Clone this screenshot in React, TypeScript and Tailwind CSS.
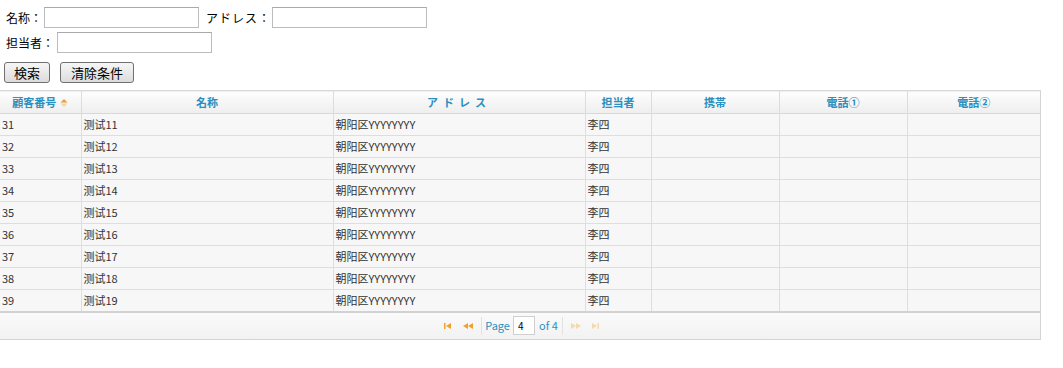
import React from 'react'

const COLS = [
  { key: 'no', label: '顧客番号', w: 81, sort: true },
  { key: 'name', label: '名称', w: 252 },
  { key: 'addr', label: 'アドレス', w: 252 },
  { key: 'staff', label: '担当者', w: 66 },
  { key: 'mobile', label: '携帯', w: 128 },
  { key: 'tel1', label: '電話①', w: 128 },
  { key: 'tel2', label: '電話②', w: 133 },
]

const ROWS = Array.from({ length: 9 }, (_, i) => ({
  no: String(31 + i),
  name: `测试${11 + i}`,
  addr: '朝阳区YYYYYYYY',
  staff: '李四',
  mobile: '',
  tel1: '',
  tel2: '',
}))

const font = { fontFamily: '"Noto Sans CJK JP", "Noto Sans CJK SC", "Liberation Sans", sans-serif' }

function TextInput({ w }: { w: string }) {
  return <input className={`${w} h-[21px] border border-[#bcbcbc] border-t-[#a9a9a9] bg-white px-1 text-[12px] outline-none`} />
}

function PagerIcon({ kind, on }: { kind: 'first' | 'prev' | 'next' | 'last'; on: boolean }) {
  const c = on ? '#f0a030' : '#f5d8b0'
  return (
    <svg width="16" height="10" viewBox="0 0 16 10" className="mx-[2px]">
      {kind === 'first' && (
        <>
          <rect x="3" y="2" width="1.5" height="6" fill={c} />
          <path d="M5 5 L10 2 L10 8 Z" fill={c} />
        </>
      )}
      {kind === 'prev' && (
        <>
          <path d="M2 5 L7 2 L7 8 Z" fill={c} />
          <path d="M7 5 L12 2 L12 8 Z" fill={c} />
        </>
      )}
      {kind === 'next' && (
        <>
          <path d="M4 2 L9 5 L4 8 Z" fill={c} />
          <path d="M9 2 L14 5 L9 8 Z" fill={c} />
        </>
      )}
      {kind === 'last' && (
        <>
          <path d="M5 2 L10 5 L5 8 Z" fill={c} />
          <rect x="10.5" y="2" width="1.5" height="6" fill={c} />
        </>
      )}
    </svg>
  )
}

export default function App() {
  return (
    <div className="w-[1063px] h-[368px] bg-white text-[12px] text-black" style={font}>
      <div className="pl-[6px] pt-[7px]">
        <div className="flex items-center h-[21px]">
          <span>名称：</span>
          <span className="ml-[2px]"><TextInput w="w-[155px]" /></span>
          <span className="ml-[7px] tracking-[1px]">アドレス：</span>
          <span className="ml-[1px]"><TextInput w="w-[155px]" /></span>
        </div>
        <div className="flex items-center h-[21px] mt-[4px]">
          <span>担当者：</span>
          <span className="ml-[3px]"><TextInput w="w-[155px]" /></span>
        </div>
      </div>
      <div className="flex gap-[10px] pl-[4px] mt-[9px]">
        <button className="h-[21px] w-[46px] border border-[#707070] rounded-[3px] bg-gradient-to-b from-[#f6f6f6] to-[#dcdcdc] text-[13px] leading-none">検索</button>
        <button className="h-[21px] w-[74px] border border-[#707070] rounded-[3px] bg-gradient-to-b from-[#f6f6f6] to-[#dcdcdc] text-[13px] leading-none">清除条件</button>
      </div>

      <div className="mt-[7px] w-[1041px] border-r border-[#d4d4d4] border-b">
        <table className="w-[1040px] border-collapse table-fixed text-[11px]">
          <colgroup>
            {COLS.map(c => <col key={c.key} style={{ width: c.w }} />)}
          </colgroup>
          <thead>
            <tr className="h-[23px] bg-gradient-to-b from-[#fdfdfd] to-[#efefef] border-t border-b border-[#d8d8d8]">
              {COLS.map(c => (
                <th key={c.key} className="border-l first:border-l-0 border-[#dcdcdc] font-bold text-[#2a8fbf] text-[11px] text-center">
                  <span className={c.key === 'addr' ? 'tracking-[5px]' : ''}>{c.label}</span>
                  {c.sort && (
                    <svg width="8" height="10" viewBox="0 0 8 10" className="inline ml-[4px] -mt-[2px] align-middle">
                      <path d="M4 1 L7.5 4.5 L0.5 4.5 Z" fill="#e8a030" />
                      <path d="M0.5 5.5 L7.5 5.5 L4 9 Z" fill="#f3d4a8" />
                    </svg>
                  )}
                </th>
              ))}
            </tr>
          </thead>
          <tbody>
            {ROWS.map(r => (
              <tr key={r.no} className="h-[22px] bg-[#f7f7f7] border-b border-[#dedede] last:border-b-2 last:border-[#d2d2d2]">
                {COLS.map(c => (
                  <td key={c.key} className="border-l first:border-l-0 border-[#dedede] pl-[2px] text-[#333] whitespace-nowrap">
                    {r[c.key as keyof typeof r]}
                  </td>
                ))}
              </tr>
            ))}
          </tbody>
        </table>
        <div className="h-[26px] bg-gradient-to-b from-[#fafafa] to-[#f2f2f2] flex items-center justify-center text-[11px] text-[#2a8fbf] pl-[4px]">
          <PagerIcon kind="first" on />
          <PagerIcon kind="prev" on />
          <span className="h-[18px] border-l border-[#e2e2e2] ml-[2px] mr-[3px]" />
          <span>Page</span>
          <input defaultValue="4" className="ml-[3px] mr-[4px] w-[22px] h-[19px] border border-[#cfcfcf] bg-white text-black text-[10px] pl-[4px] outline-none" />
          <span>of 4</span>
          <span className="h-[18px] border-l border-[#e2e2e2] ml-[4px] mr-[2px]" />
          <PagerIcon kind="next" on={false} />
          <PagerIcon kind="last" on={false} />
        </div>
      </div>
    </div>
  )
}
